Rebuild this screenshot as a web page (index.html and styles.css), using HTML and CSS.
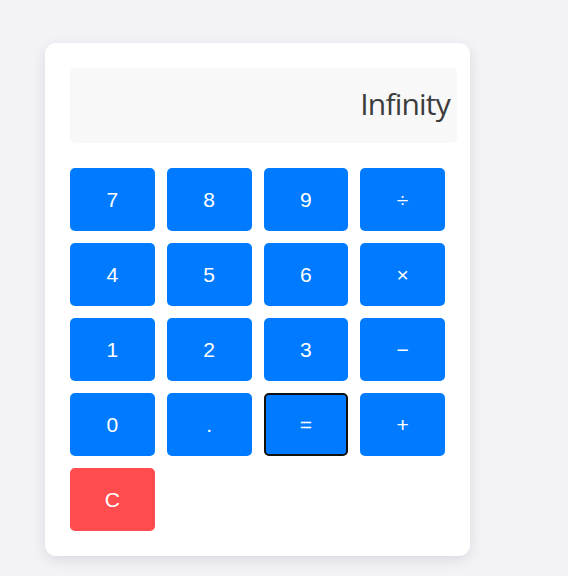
FILE: index.html
```html
<!DOCTYPE html>
<html>
<head>
<meta charset="utf-8">
<link rel="stylesheet" href="styles.css">
</head>
<body>
<div class="calc">
  <div class="display">Infinity</div>
  <div class="keys">
    <button class="key">7</button>
    <button class="key">8</button>
    <button class="key">9</button>
    <button class="key">÷</button>
    <button class="key">4</button>
    <button class="key">5</button>
    <button class="key">6</button>
    <button class="key">×</button>
    <button class="key">1</button>
    <button class="key">2</button>
    <button class="key">3</button>
    <button class="key">−</button>
    <button class="key">0</button>
    <button class="key">.</button>
    <button class="key key-focus">=</button>
    <button class="key">+</button>
    <button class="key key-clear">C</button>
  </div>
</div>
</body>
</html>
```
FILE: styles.css
```css
html, body {
  margin: 0;
  padding: 0;
}
body {
  background: #f3f3f7;
  font-family: "Liberation Sans", Arial, sans-serif;
  padding: 43px 0 0 45px;
  height: 576px;
  box-sizing: border-box;
}
.calc {
  width: 425px;
  box-sizing: border-box;
  padding: 25px;
  background: #ffffff;
  border-radius: 11px;
  box-shadow: 0 4px 14px rgba(0, 0, 0, 0.1);
}
.display {
  width: 387px;
  height: 75px;
  box-sizing: border-box;
  background: #f8f8f8;
  border-radius: 5px;
  margin-bottom: 25px;
  padding: 15px 7px 0 0;
  text-align: right;
  font-family: "Open Sans", sans-serif;
  font-size: 30px;
  letter-spacing: -0.8px;
  color: #3c3c3c;
}
.keys {
  display: grid;
  grid-template-columns: repeat(4, 1fr);
  grid-auto-rows: 63px;
  column-gap: 12px;
  row-gap: 12px;
}
.key {
  border: none;
  border-radius: 5px;
  background: #007bff;
  color: #ffffff;
  font-family: "Liberation Sans", Arial, sans-serif;
  font-size: 21px;
  padding: 0;
  margin: 0;
}
.key-focus {
  border: 2px solid #111111;
  background: #007bff;
}
.key-clear {
  background: #ff4d4f;
}
```
